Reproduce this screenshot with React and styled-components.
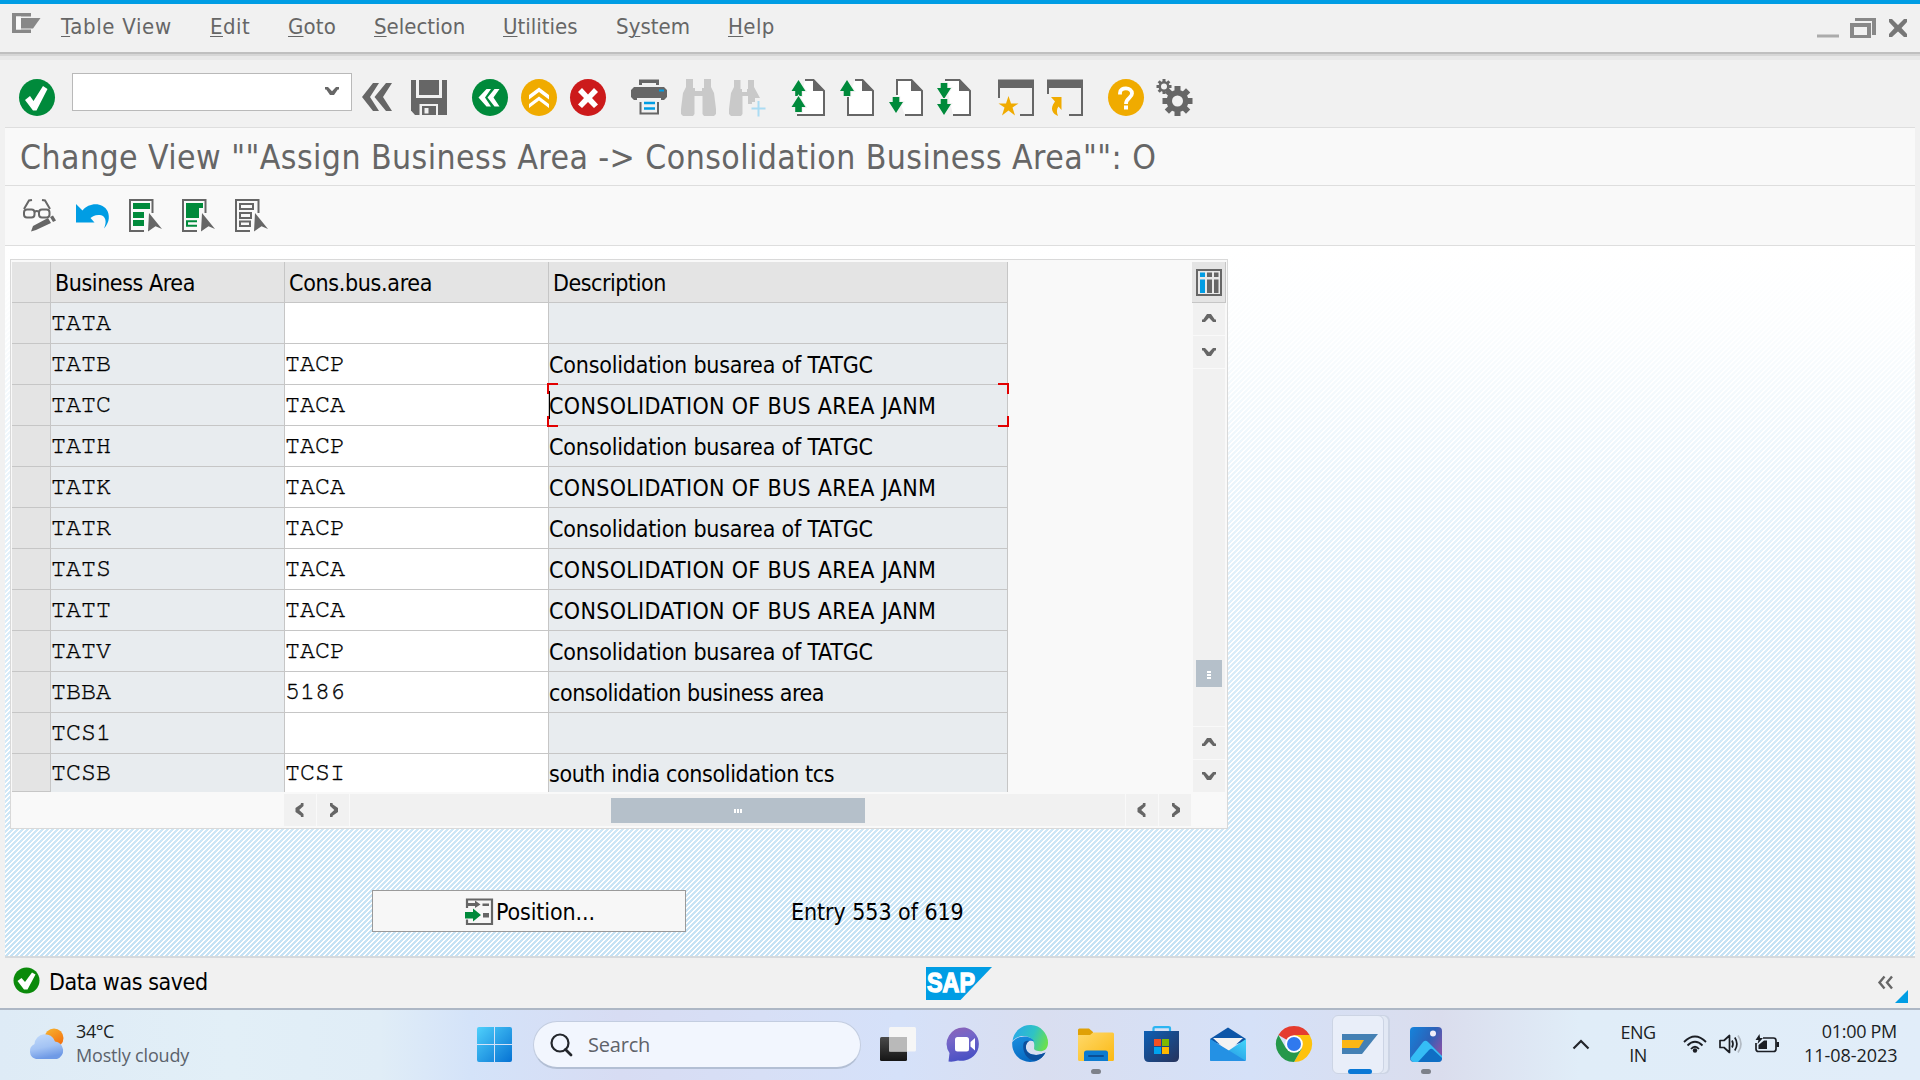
import React from "react";
import styled, { createGlobalStyle, css } from "styled-components";

const UI = `"DejaVu Sans Condensed", "DejaVu Sans", sans-serif`;
const SEGOE = `"Open Sans", "Noto Sans", sans-serif`;
const MONO = `"FreeMono", "Liberation Mono", monospace`;
const INK = "#666666";
const GREEN = "#008a3b";
const BLUE = "#009de4";
const AMBER = "#f0ab00";

const GlobalStyle = createGlobalStyle`
  body { margin: 0; background: #f1f1f1; overflow: hidden; }
  * { box-sizing: border-box; }
  svg { display: block; flex: none; }
`;

const Screen = styled.div`
  width: 1920px;
  height: 1080px;
  display: flex;
  flex-direction: column;
  background: #f1f1f1;
  font-family: ${UI};
`;

const Text = styled.span`
  white-space: pre;
  letter-spacing: ${(p) => p.$ls || 0}px;
`;

const Icon = styled.svg.attrs((p) => ({
  width: p.$w,
  height: p.$h,
  viewBox: `0 0 ${p.$w} ${p.$h}`,
}))`
  margin-left: ${(p) => p.$ml || 0}px;
  margin-top: ${(p) => p.$mt || 0}px;
  overflow: visible;
`;

/* ---------- menu bar ---------- */
const Accent = styled.div`
  height: 4px;
  background: ${BLUE};
`;
const MenuBar = styled.nav`
  height: 48px;
  display: flex;
  align-items: center;
  padding: 0 13px 0 12px;
`;
const MenuList = styled.div`
  display: flex;
  gap: 39px;
  margin-left: 20px;
  flex: 1;
`;
const MenuItem = styled.span`
  width: ${(p) => p.$w}px;
  font-size: 22px;
  line-height: 44px;
  height: 46px;
  color: ${INK};
  white-space: pre;
  letter-spacing: ${(p) => p.$ls}px;
`;
const Mnemonic = styled.u`
  text-decoration-thickness: 1px;
  text-underline-offset: 2px;
`;
const MenuShadow = styled.div`
  height: 8px;
  background: linear-gradient(#bfbfbf 0 2px, #d6d6d6 2px 4px, #e8e8e8 4px 8px);
`;

/* ---------- framed work area ---------- */
const Frame = styled.main`
  height: 898px;
  margin: 0 5px;
  display: flex;
  flex-direction: column;
`;
const Toolbar = styled.div`
  height: 68px;
  border-bottom: 1px solid #dedede;
  display: flex;
  align-items: flex-start;
  padding: 19px 0 0 14px;
`;
const CommandField = styled.div`
  width: 280px;
  height: 38px;
  margin: -6px 0 0 17px;
  border: 1px solid #b9b9b9;
  background: #fff;
  display: flex;
  align-items: center;
  justify-content: flex-end;
  padding: 0 11px 2px 0;
`;
const TitleStrip = styled.h1`
  margin: 0;
  height: 58px;
  padding: 1px 0 0 15px;
  border-bottom: 1px solid #dedede;
  background: #f9f9f9;
  font-size: 33.5px;
  font-weight: 400;
  line-height: 57px;
  color: ${INK};
`;
const AppToolbar = styled.div`
  height: 60px;
  border-bottom: 1px solid #dedede;
  background: #f9f9f9;
  display: flex;
  align-items: flex-start;
  padding: 13px 0 0 18px;
`;
const Workspace = styled.section`
  flex: 1;
  border-bottom: 2px solid #d5d9dc;
  padding: 13px 0 0 5px;
  background:
    repeating-linear-gradient(135deg, rgba(255,255,255,0) 0 1.77px, #fff 1.77px 3.535px),
    linear-gradient(#ffffff 0, #fbfdfe 80px, #dceefa 380px, #c5e2f4 710px);
`;

/* ---------- table control ---------- */
const TableControl = styled.div`
  width: 1218px;
  height: 570px;
  border: 1px solid #d9d9d9;
  background: #f9f9f9;
  display: flex;
  padding: 2px 1px 2px 1px;
`;
const TableMain = styled.div`
  width: 1181px;
  display: flex;
  flex-direction: column;
`;
const Grid = styled.div`
  width: 996px;
  height: 530px;
`;
const cellSize = css`
  display: grid;
  grid-template-columns: 39px 234px 264px 459px;
  grid-template-rows: 100%;
`;
const HeadRow = styled.div`
  ${cellSize}
  height: 41px;
`;
const HeadCell = styled.div`
  background: #e4e4e4;
  border-right: 1px solid #c6c6c6;
  border-bottom: 1px solid #c6c6c6;
  padding: 1px 0 0 4px;
  font-size: 23px;
  line-height: 41px;
  color: #000;
`;
const BodyRow = styled.div`
  ${cellSize}
  height: ${(p) => (p.$last ? 38 : 41)}px;
`;
const TONES = { edit: "#ffffff", sel: "#e4e4e4", read: "#e8ecef" };
const Cell = styled.div`
  position: relative;
  background: ${(p) => TONES[p.$tone || "read"]};
  border-right: 1px solid #c6c6c6;
  border-bottom: ${(p) => (p.$last && p.$tone !== "sel" ? "none" : "1px solid #c6c6c6")};
  font-family: ${(p) => (p.$mono ? MONO : UI)};
  font-size: ${(p) => (p.$mono ? 25 : 23)}px;
  line-height: ${(p) => (p.$mono ? (p.$last ? 37 : 39) : p.$last ? 41 : 43)}px;
  color: #000;
  -webkit-text-stroke: ${(p) => (p.$mono ? "0.35px #000" : "0")};
`;
const Corner = styled.i`
  position: absolute;
  width: 11px;
  height: 11px;
  border: 0 solid #e20000;
  ${(p) => (p.$top ? "top: -2px; border-top-width: 2px;" : "bottom: -2px; border-bottom-width: 2px;")}
  ${(p) => (p.$left ? "left: -2px; border-left-width: 2px;" : "right: -2px; border-right-width: 2px;")}
  z-index: 1;
`;
const Caret = styled.i`
  position: absolute;
  left: 0;
  top: 6px;
  width: 1px;
  height: 28px;
  background: #000;
`;
const HScroll = styled.div`
  display: flex;
  gap: 1px;
  height: 32px;
  margin: 2px 0 0 272px;
  width: 907px;
`;
const ScrollButton = styled.div`
  width: 32px;
  height: 32px;
  background: #f1f1f1;
  display: flex;
  align-items: center;
  justify-content: center;
`;
const HTrack = styled.div`
  flex: 1;
  background: #f1f1f1;
  padding: 4px 0 0 261px;
`;
const HThumb = styled.div`
  width: 254px;
  height: 25px;
  background: #b5c0ca;
  display: flex;
  align-items: center;
  justify-content: center;
  gap: 1px;
`;
const Grip = styled.i`
  width: ${(p) => (p.$v ? 4 : 2)}px;
  height: ${(p) => (p.$v ? 2 : 4)}px;
  background: #fff;
`;
const VColumn = styled.div`
  width: 32px;
  height: 530px;
  display: flex;
  flex-direction: column;
  gap: 1px;
`;
const ConfigButton = styled.div`
  width: 34px;
  height: 41px;
  margin: 0 0 -1px -1px;
  background: #e4e4e4;
  border: solid #c6c6c6;
  border-width: 0 1px 1px 0;
  display: flex;
  align-items: center;
  justify-content: center;
`;
const VTrack = styled.div`
  flex: 1;
  background: #f1f1f1;
  padding: 291px 0 0 3px;
`;
const VThumb = styled.div`
  width: 26px;
  height: 27px;
  background: #b5c0ca;
  display: flex;
  flex-direction: column;
  align-items: center;
  justify-content: center;
  padding-top: 3px;
  gap: 1px;
`;
const Actions = styled.div`
  display: flex;
  margin: 61px 0 0 362px;
`;
const PositionButton = styled.div`
  width: 314px;
  height: 42px;
  border: 1px solid #9a9a9a;
  background: #f7f7f7;
  display: flex;
  align-items: center;
  padding-left: 92px;
  gap: 2px;
  font-size: 23px;
  line-height: 42px;
`;
const ButtonLabel = styled(Text)`
  padding-top: 2px;
`;
const EntryInfo = styled.div`
  margin-left: 105px;
  font-size: 23px;
  line-height: 44px;
`;

/* ---------- status bar ---------- */
const StatusBar = styled.footer`
  height: 50px;
  display: flex;
  align-items: flex-start;
  padding: 9px 12px 0 13px;
`;
const StatusText = styled.div`
  width: 877px;
  padding-left: 9px;
  font-size: 23px;
  line-height: 30px;
`;
const StatusRight = styled.div`
  margin-left: auto;
  display: flex;
  align-items: flex-start;
`;

/* ---------- taskbar ---------- */
const Taskbar = styled.div`
  height: 72px;
  border-top: 2px solid #adb7c5;
  display: flex;
  align-items: center;
  padding: 0 23px 2px 28px;
  font-family: ${SEGOE};
  color: #1b1e24;
  background: linear-gradient(90deg, #deebf6 0, #e2eff7 230px, #e0edf7 380px, #d4e3f9 470px, #d7dcf3 620px, #d7dff6 760px, #d5e1f9 900px, #d9def0 1040px, #d5e1f8 1250px, #dadded 1440px, #e0edf8 1580px, #e1edf9 100%);
`;
const Weather = styled.div`
  width: 449px;
  display: flex;
  align-items: center;
`;
const TwoLines = styled.div`
  display: flex;
  flex-direction: column;
  text-align: ${(p) => p.$align || "left"};
  margin-left: ${(p) => p.$ml}px;
  margin-top: ${(p) => p.$mt ?? -3}px;
  width: ${(p) => (p.$w ? p.$w + "px" : "auto")};
  font-size: 18px;
  line-height: ${(p) => p.$lh || 24}px;
`;
const Muted = styled(Text)`
  color: #5b626b;
`;
const SearchBox = styled.div`
  width: 328px;
  height: 48px;
  margin: 2px 0 0 21px;
  border-radius: 24px;
  border: 1px solid #c3cde0;
  border-bottom: 2px solid #b3bfd4;
  background: #f2f6fe;
  display: flex;
  align-items: center;
  padding-left: 15px;
  gap: 15px;
  font-size: 20px;
  color: #5f6269;
`;
const Apps = styled.div`
  display: flex;
  margin-left: 4px;
`;
const AppSlot = styled.div`
  position: relative;
  width: 66px;
  height: 68px;
  display: flex;
  align-items: center;
  justify-content: center;
  padding-left: ${(p) => p.$nudge || 0}px;
`;
const ActiveTile = styled.div`
  position: absolute;
  left: 5px;
  top: 5px;
  width: 52px;
  height: 59px;
  border-radius: 6px;
  border: 1px solid #ccd4e4;
  background: #e9eef9;
  box-shadow: 5px 0 0 -1px #e2e8f4, 6px 0 0 0 #ccd4e4;
`;
const Running = styled.i`
  position: absolute;
  bottom: 4px;
  left: 50%;
  width: ${(p) => (p.$on ? 24 : 10)}px;
  height: 5px;
  margin-left: ${(p) => (p.$on ? -12 : -5)}px;
  border-radius: 3px;
  background: ${(p) => (p.$on ? "#0a78d6" : "#7d818a")};
`;
const Tray = styled.div`
  margin-left: auto;
  display: flex;
  align-items: center;
`;

/* ---------- icon parts ---------- */
const TURNS = {
  down: "",
  left: "translate(-0.5 0) rotate(90 8 8)",
  up: "translate(0 -1) rotate(180 8 8)",
  right: "translate(1 0) rotate(270 8 8)",
};
const Chevron = ({ dir }) => (
  <Icon $w={16} $h={16}>
    <path d="M1 4h3l4 4.3L12 4h3v2.6h-1.2L10 12H6L2.2 6.6H1z" transform={TURNS[dir]} fill={INK} />
  </Icon>
);

const DocIcon = ({ ml, arrows, page }) => (
  <Icon $w={34} $h={37} $ml={ml}>
    <path d={page} fill="#fff" />
    <path d={page} fill="none" stroke={INK} strokeWidth="2" />
    <path d="M22 0.5L33.5 12H22z" fill={INK} />
    {arrows.map(([x, y, up]) => (
      <path
        key={y}
        d={up ? "M7 0L14 11H10.3V16H3.7V11H0z" : "M7 16L0 5H3.7V0H10.3V5H14z"}
        transform={`translate(${x} ${y})`}
        fill={GREEN}
        stroke="#f1f1f1"
        strokeWidth="2"
        paintOrder="stroke"
      />
    ))}
  </Icon>
);

const Gear = ({ cx, cy, r, hole, teeth }) => (
  <g>
    {Array.from({ length: teeth }, (_, i) => (
      <rect
        key={i}
        x={cx - r * 0.2}
        y={cy - r}
        width={r * 0.4}
        height={r}
        fill={INK}
        transform={`rotate(${(360 / teeth) * i} ${cx} ${cy})`}
      />
    ))}
    <circle cx={cx} cy={cy} r={r * 0.73} fill={INK} />
    <circle cx={cx} cy={cy} r={hole} fill="#f1f1f1" />
  </g>
);

const ListIcon = ({ ml, kind }) => (
  <Icon $w={33} $h={33} $ml={ml}>
    <path d="M23.5 14V1H1V32H15" fill="none" stroke={INK} strokeWidth="2" />
    {kind === "all" && <path d="M4 4H21V10H4zM4 13H15V19H4zM4 21H15V27H4z" fill={GREEN} />}
    {kind === "block" && (
      <>
        <path d="M4 4H21V9H17V19H4z" fill={GREEN} />
        <path d="M15 22.2H5V26.8H15" fill="none" stroke={GREEN} strokeWidth="2" />
      </>
    )}
    {kind === "none" && (
      <path d="M5 5H18V10H5zM5 14H16V19H5zM5 22.5H15V27H5z" fill="none" stroke={INK} strokeWidth="2" />
    )}
    <path d="M20 14L33 30L26.5 27.3L19 32.5z" fill={INK} />
  </Icon>
);

const CircleIcon = ({ ml, color, children }) => (
  <Icon $w={36} $h={37} $ml={ml}>
    <ellipse cx="18" cy="18.5" rx="18" ry="18.5" fill={color} />
    {children}
  </Icon>
);

const MENU = [
  ["", "T", "able View", 110, 0.68],
  ["", "E", "dit", 39, 0.45],
  ["", "G", "oto", 47, 0.15],
  ["", "S", "election", 90, 0],
  ["", "U", "tilities", 74, 0],
  ["S", "y", "stem", 73, 0.05],
  ["", "H", "elp", 46, 0.4],
];

const CAPS = ["CONSOLIDATION OF BUS AREA JANM", 0.32];
const MIXED = ["Consolidation busarea of TATGC", -0.2];
const ROWS = [
  ["TATA", "", ["", 0]],
  ["TATB", "TACP", MIXED],
  ["TATC", "TACA", CAPS],
  ["TATH", "TACP", MIXED],
  ["TATK", "TACA", CAPS],
  ["TATR", "TACP", MIXED],
  ["TATS", "TACA", CAPS],
  ["TATT", "TACA", CAPS],
  ["TATV", "TACP", MIXED],
  ["TBBA", "5186", ["consolidation business area", -0.44]],
  ["TCS1", "", ["", 0]],
  ["TCSB", "TCSI", ["south india consolidation tcs", -0.36]],
];

const MainToolbar = () => (
  <Toolbar>
    <CircleIcon color={GREEN}>
      <path d="M6 21L11 17L14.5 22L24 7L28.5 10L17.5 31.5H14z" fill="#fff" />
    </CircleIcon>
    <CommandField>
      <Chevron dir="down" />
    </CommandField>
    <Icon $w={30} $h={28} $ml={10} $mt={4}>
      <path d="M11 0H17L8 14L17 28H11L0 14zM24 0H30L21 14L30 28H24L12.5 14z" fill={INK} />
    </Icon>
    <Icon $w={36} $h={36} $ml={19}>
      <path d="M0 1H36V36H4L0 31.500z" fill={INK} />
      <path d="M5 1H31V19H5z" fill="#f1f1f1" />
      <path d="M8 1H28V16H8z" fill={INK} />
      <path d="M8.500 25H27V36H8.500z" fill="#f1f1f1" />
      <path d="M11 27H25V36H11z" fill={INK} />
      <path d="M13.500 29H17.500V34.500H13.500z" fill="#f1f1f1" />
    </Icon>
    <CircleIcon color={GREEN} ml={25}>
      <path d="M14.5 10H19L13 18.5L19 27.5H14.5L6.5 18.5zM22.5 10H27.5L21.5 18.5L27.5 27.5H22.5L15.5 18.5z" fill="#fff" />
    </CircleIcon>
    <CircleIcon color={AMBER} ml={13}>
      <path d="M18 8.5L28 16V20.5L18 13L8 20.5V16zM18 17.5L28 25V29L18 21.5L8 29V25z" fill="#fff" />
    </CircleIcon>
    <CircleIcon color="#cc1a1b" ml={13}>
      <path d="M12 9L18 15.5L24 9L28 13L22 19L28 25.5L24 29L18 23L12 29L8 25.5L14 19L8 13z" fill="#fff" />
    </CircleIcon>
    <Icon $w={36} $h={36} $ml={25}>
      <path d="M8 6V0.5H28V6H25V4H11V6zM3 8H33L36 11V18L33 21H30V16H6V21H3L0 18V11z" fill={INK} />
      <path d="M28 10.5H33V12.5H28z" fill={BLUE} />
      <path d="M6 16H30V19H6z" fill={INK} />
      <path d="M8 19H29V23H8z" fill="#f1f1f1" />
      <path d="M9.500 23V34.500H27V23" fill="none" stroke={INK} strokeWidth="2" />
      <path d="M13 24H24M13 29.500H24" stroke={BLUE} strokeWidth="2.300" />
    </Icon>
    <Icon $w={35} $h={37} $ml={14}>
      <path d="M5 0H12V9H14V12H21V9H23V0H30V8L33 14L35 30V35L33 37H23L21.500 35V17H13.500V35L12 37H2L0 35V30L2 14L5 8z" fill="#c9c9c9" />
    </Icon>
    <Icon $w={37} $h={37} $ml={13}>
      <path d="M5 1H11.500V10H13V13H18V10H19V1H25V8L31 19H26V23H23V25H19V17H13.500V35L12 37H2L0 35V30L2 14L5 8z" fill="#c9c9c9" />
      <path d="M29.500 22V37.500M22.500 29.500H36.500" stroke="#abdcf3" strokeWidth="2" />
    </Icon>
    <DocIcon ml={25} page="M14 1H22.500L33 12V36H6" arrows={[[0.500, 1, true], [0.500, 17, true]]} />
    <DocIcon ml={14.500} page="M15 1H22.500L33 12V36H8V18" arrows={[[0, 1, true]]} />
    <DocIcon ml={15.500} page="M8 16V1H22.500L33 12V36H16" arrows={[[0, 18, false]]} />
    <DocIcon ml={14} page="M8 1H22.500L33 12V36H16" arrows={[[0, 4, false], [0, 20, false]]} />
    <Icon $w={36} $h={37} $ml={27}>
      <path d="M0 0.500H36V9H0z" fill={INK} />
      <path d="M1 9V19M35 9V36H22" fill="none" stroke={INK} strokeWidth="2" />
      <path d="M10.500 17L13 24.500H20.500L14.500 28.500L17 36.500L10.500 31.500L4 36.500L6.500 28.500L0.500 24.500H8z" fill={AMBER} />
    </Icon>
    <Icon $w={36} $h={37} $ml={13}>
      <path d="M0 0.500H36V9H0z" fill={INK} />
      <path d="M1 9V15M35 9V36H22" fill="none" stroke={INK} strokeWidth="2" />
      <path d="M4 18H14.500V31L11.500 27.500C9.500 30 9.500 33 11 37C6 35 2 30 8 22.500z" fill={AMBER} />
    </Icon>
    <CircleIcon color={AMBER} ml={25}>
      <path d="M12 15.500V14C12 7.500 24 8 24 14.500C24 19 18 19 18 25" fill="none" stroke="#fff" strokeWidth="3.800" />
      <path d="M16 26.500H20V30.500H16z" fill="#fff" />
    </CircleIcon>
    <Icon $w={35} $h={37} $ml={13}>
      <Gear cx={7} cy={7.500} r={7.500} hole={3} teeth={8} />
      <Gear cx={20.500} cy={22} r={15} hole={5.500} teeth={8} />
    </Icon>
  </Toolbar>
);

const TableBlock = () => (
  <TableControl>
    <TableMain>
      <Grid>
        <HeadRow>
          <HeadCell />
          <HeadCell><Text $ls={-0.42}>Business Area</Text></HeadCell>
          <HeadCell><Text $ls={-0.32}>Cons.bus.area</Text></HeadCell>
          <HeadCell><Text $ls={-0.46}>Description</Text></HeadCell>
        </HeadRow>
        {ROWS.map(([area, cons, [desc, ls]], i) => {
          const last = i === ROWS.length - 1;
          const focused = area === "TATC";
          return (
            <BodyRow key={area} $last={last}>
              <Cell $tone="sel" $last={last} />
              <Cell $mono $last={last}><Text>{area}</Text></Cell>
              <Cell $mono $tone="edit" $last={last}><Text>{cons}</Text></Cell>
              <Cell $last={last}>
                <Text $ls={ls}>{desc}</Text>
                {focused && (
                  <>
                    <Corner $top $left />
                    <Corner $top />
                    <Corner $left />
                    <Corner />
                    <Caret />
                  </>
                )}
              </Cell>
            </BodyRow>
          );
        })}
      </Grid>
      <HScroll>
        <ScrollButton><Chevron dir="left" /></ScrollButton>
        <ScrollButton><Chevron dir="right" /></ScrollButton>
        <HTrack>
          <HThumb><Grip /><Grip /><Grip /></HThumb>
        </HTrack>
        <ScrollButton><Chevron dir="left" /></ScrollButton>
        <ScrollButton><Chevron dir="right" /></ScrollButton>
      </HScroll>
    </TableMain>
    <VColumn>
      <ConfigButton>
        <Icon $w={26} $h={27}>
          <path d="M1 1H25V26H1z" fill="#e9e9e9" stroke={INK} strokeWidth="2" />
          <path d="M4 3.500H9V8H4zM4 10.500H9V24H4z" fill={BLUE} />
          <path d="M11 3.500H16V8H11zM11 10.500H16V24H11zM18 3.500H22.500V8H18zM18 10.500H22.500V24H18z" fill={INK} />
        </Icon>
      </ConfigButton>
      <ScrollButton><Chevron dir="up" /></ScrollButton>
      <ScrollButton><Chevron dir="down" /></ScrollButton>
      <VTrack>
        <VThumb><Grip $v /><Grip $v /><Grip $v /></VThumb>
      </VTrack>
      <ScrollButton><Chevron dir="up" /></ScrollButton>
      <ScrollButton><Chevron dir="down" /></ScrollButton>
    </VColumn>
  </TableControl>
);

const DefsHost = styled.svg`
  position: absolute;
`;
const Defs = () => (
  <DefsHost width="0" height="0">
    <defs>
      <linearGradient id="win" x1="0" y1="0" x2="1" y2="1"><stop offset="0" stopColor="#4fd0fb" /><stop offset="1" stopColor="#0672d3" /></linearGradient>
      <linearGradient id="sun" x1="0" y1="0" x2="0.6" y2="1"><stop offset="0" stopColor="#f7b731" /><stop offset="1" stopColor="#f4700e" /></linearGradient>
      <linearGradient id="cloud" x1="0" y1="0" x2="0.3" y2="1"><stop offset="0" stopColor="#c4dcfb" /><stop offset="0.6" stopColor="#a3c3f4" /><stop offset="1" stopColor="#6f9ae6" /></linearGradient>
      <linearGradient id="chat" x1="0" y1="0" x2="0.3" y2="1"><stop offset="0" stopColor="#8f62b4" /><stop offset="0.4" stopColor="#7566c8" /><stop offset="1" stopColor="#4a51c4" /></linearGradient>
      <linearGradient id="edgeTop" x1="0" y1="0.3" x2="1" y2="0.6"><stop offset="0" stopColor="#2aa9e8" /><stop offset="0.55" stopColor="#2fc3c4" /><stop offset="1" stopColor="#6be04d" /></linearGradient>
      <linearGradient id="edgeLow" x1="0" y1="0" x2="0.5" y2="1"><stop offset="0" stopColor="#1a8fe0" /><stop offset="1" stopColor="#0667c0" /></linearGradient>
      <linearGradient id="folder" x1="0" y1="0" x2="1" y2="1"><stop offset="0" stopColor="#ffd96b" /><stop offset="1" stopColor="#fbb913" /></linearGradient>
      <linearGradient id="store" x1="0" y1="0" x2="1" y2="1"><stop offset="0" stopColor="#0e5fb4" /><stop offset="1" stopColor="#27335c" /></linearGradient>
      <linearGradient id="mail" x1="0" y1="1" x2="1" y2="0"><stop offset="0" stopColor="#1c86dc" /><stop offset="1" stopColor="#43d6fa" /></linearGradient>
      <linearGradient id="photo" x1="0" y1="0" x2="1" y2="0.6"><stop offset="0" stopColor="#1484dc" /><stop offset="0.6" stopColor="#2c62b8" /><stop offset="1" stopColor="#8052a8" /></linearGradient>
      <linearGradient id="dark" x1="0" y1="0" x2="0" y2="1"><stop offset="0" stopColor="#4a4a4a" /><stop offset="1" stopColor="#151515" /></linearGradient>
    </defs>
  </DefsHost>
);

const TileIcon = styled(Icon)`
  position: relative;
`;

const TaskbarBlock = () => (
  <Taskbar>
    <Weather>
      <Icon $w={38} $h={32}>
        <circle cx="26" cy="10" r="9.500" fill="url(#sun)" />
        <path d="M8 31A8 8 0 0 1 6.500 16A10.500 10.500 0 0 1 27 13.500A9 9 0 0 1 29 31z" fill="url(#cloud)" />
      </Icon>
      <TwoLines $ml={10}>
        <Text $ls={-0.4}>34°C</Text>
        <Muted $ls={-0.17}>Mostly cloudy</Muted>
      </TwoLines>
    </Weather>
    <Icon $w={35} $h={35}>
      <path d="M2 0H17V17H0V2Q0 0 2 0zM18 0H33Q35 0 35 2V17H18zM0 18H17V35H2Q0 35 0 33zM18 18H35V33Q35 35 33 35H18z" fill="url(#win)" />
    </Icon>
    <SearchBox>
      <Icon $w={24} $h={24}>
        <circle cx="11" cy="10" r="8.500" fill="none" stroke="#23262b" strokeWidth="2.200" />
        <path d="M16.500 16.500L22 22" stroke="#23262b" strokeWidth="2.800" strokeLinecap="round" />
      </Icon>
      <Text $ls={-0.2}>Search</Text>
    </SearchBox>
    <Apps>
      <AppSlot>
        <Icon $w={36} $h={34}>
          <rect x="0" y="10" width="27" height="24" rx="1.500" fill="url(#dark)" />
          <rect x="9" y="0" width="27" height="24.500" rx="1.500" fill="#f6f6f6" />
          <path d="M9 10H27V24.500H9z" fill="#b9b9b9" />
        </Icon>
      </AppSlot>
      <AppSlot $nudge={1}>
        <Icon $w={34} $h={35}>
          <path d="M17 0.500A17 16.500 0 1 1 10 33.500Q6 35 0.500 34.500L1.500 26A17 16.500 0 0 1 17 0.500z" fill="url(#chat)" />
          <rect x="7" y="10" width="14" height="14.500" rx="2.500" fill="#fff" />
          <path d="M22.500 15L27 11V23.500L22.500 19.500z" fill="#fff" />
        </Icon>
      </AppSlot>
      <AppSlot>
        <Icon $w={36} $h={36}>
          <path d="M0.500 15A17.800 17.800 0 0 1 36 17C36 25 29 26.500 24 24.500C20.500 23 23 22 22 17C20 9 7 7 0.500 15z" fill="url(#edgeTop)" />
          <path d="M0.300 16C6 8.500 19 9 22 15.500C17 13 13 17 14 22.500C15 29 25 31 33.500 26.500C30 33 24.500 36 18 36A18 18 0 0 1 0.300 16z" fill="url(#edgeLow)" />
          <path d="M11.500 17.500C10 24 14 35 24 34.500C28 33.500 31.500 30.500 33.500 26.500C25 31 15 29 14 22.500C13.500 19 15 16.500 17 15C14.500 14.500 12 15.500 11.500 17.500z" fill="#0d4f9c" />
        </Icon>
      </AppSlot>
      <AppSlot>
        <Icon $w={36} $h={33}>
          <path d="M0 2Q0 0.500 1.500 0.500H11L15 4V8H0z" fill="#e0a106" />
          <path d="M0 7H12L15 4.500H34.500Q36 4.500 36 6V31.500Q36 33 34.500 33H1.500Q0 33 0 31.500z" fill="url(#folder)" />
          <path d="M6 33V25Q6 22.500 8.500 22.500H27.500Q30 22.500 30 25V33z" fill="#0d7bd0" />
          <path d="M11 28H25" stroke="#0a4f96" strokeWidth="2" strokeLinecap="round" />
        </Icon>
        <Running />
      </AppSlot>
      <AppSlot>
        <Icon $w={35} $h={36} $ml={-2}>
          <path d="M9.500 7V2.500Q9.500 1.200 11 1.200H24.500Q26 1.200 26 2.500V7" fill="none" stroke="#2cb5f2" strokeWidth="2.200" />
          <path d="M0 5H35V31Q35 36 30 36H5Q0 36 0 31z" fill="url(#store)" />
          <path d="M10 13H17V20H10z" fill="#f25022" /><path d="M18 13H25V20H18z" fill="#7fba00" />
          <path d="M10 21H17V28H10z" fill="#00a4ef" /><path d="M18 21H25V28H18z" fill="#ffb900" />
        </Icon>
      </AppSlot>
      <AppSlot>
        <Icon $w={36} $h={34}>
          <path d="M0 12L18 0.500L36 12V14L18 20L0 14z" fill="#0d56a8" />
          <path d="M3 11H33L18 25z" fill="#f3f3f3" />
          <path d="M0 12L18 24L36 12V32.500Q36 34 34.500 34H1.500Q0 34 0 32.500z" fill="url(#mail)" />
          <path d="M0 12L36 34H1.500Q0 34 0 32.500z" fill="#2491e4" />
        </Icon>
      </AppSlot>
      <AppSlot>
        <Icon $w={36} $h={36}>
          <path d="M18 18L2.410 9A18 18 0 0 1 33.590 9z" fill="#e53b2e" />
          <path d="M18 9H33.590A18 18 0 0 1 18 36L25.800 22.500z" fill="#fdc20c" />
          <path d="M10.200 22.500L2.410 9A18 18 0 0 0 18 36L25.800 22.500z" fill="#25984a" />
          <circle cx="18" cy="18" r="8.800" fill="#fff" />
          <circle cx="18" cy="18" r="7" fill="#3079ee" />
        </Icon>
      </AppSlot>
      <AppSlot>
        <ActiveTile />
        <TileIcon $w={36} $h={20}>
          <path d="M0 0H36L20 20H0z" fill="#4480b4" />
          <path d="M0 6H22L17 14H0z" fill="#fbb616" />
        </TileIcon>
        <Running $on />
      </AppSlot>
      <AppSlot>
        <Icon $w={32} $h={35}>
          <rect width="32" height="35" rx="4" fill="url(#photo)" />
          <circle cx="23" cy="6.500" r="3" fill="#f1eef8" />
          <path d="M0.500 31L13 15Q15.500 12.500 18 15L32 29V30Q32 35 28 35H4Q1 35 0.500 31z" fill="#35bdf5" />
          <path d="M8 35L19 23Q21 21 23 22.500L32 31Q32 35 28 35z" fill="#0f6ec4" />
        </Icon>
        <Running />
      </AppSlot>
    </Apps>
    <Tray>
      <Icon $w={18} $h={11}>
        <path d="M1.500 9.500L9 2L16.500 9.500" fill="none" stroke="#23262b" strokeWidth="2.200" />
      </Icon>
      <TwoLines $ml={29} $w={38} $align="center" $lh={23} $mt={0}>
        <Text $ls={-0.5}>ENG</Text>
        <Text $ls={-0.6}>IN</Text>
      </TwoLines>
      <Icon $w={24} $h={18} $ml={26}>
        <path d="M1 7Q12 -4 23 7M4.500 10.500Q12 3 19.500 10.500M8 14Q12 9.500 16 14" fill="none" stroke="#1b1e24" strokeWidth="1.800" />
        <circle cx="12" cy="15.500" r="2.200" fill="#1b1e24" />
      </Icon>
      <Icon $w={24} $h={20} $ml={12}>
        <path d="M1 6.500H5L10.500 1.500V18.500L5 13.500H1z" fill="none" stroke="#1b1e24" strokeWidth="1.700" strokeLinejoin="round" />
        <path d="M13 6.500Q15 10 13 13.500M15.800 3.500Q20 10 15.800 16.500" fill="none" stroke="#1b1e24" strokeWidth="1.700" />
        <path d="M19 1.500Q25 10 19 18.500" fill="none" stroke="#b3bbc4" strokeWidth="1.700" />
      </Icon>
      <Icon $w={24} $h={19} $ml={12} $mt={-2}>
        <path d="M8 4H18.500Q21 4 21 6.500V15Q21 17.500 18.500 17.500H3.500Q1 17.500 1 15V9" fill="none" stroke="#1b1e24" strokeWidth="1.700" />
        <path d="M9 6.500H12V15H3.500V11zM21.500 8H24V13H21.500z" fill="#1b1e24" />
        <path d="M4.500 0L0.500 6H3.500L2.500 10L8 4H5z" fill="#1b1e24" />
      </Icon>
      <TwoLines $ml={25} $w={93} $align="right">
        <Text $ls={-0.3}>01:00 PM</Text>
        <Text $ls={-0.05}>11-08-2023</Text>
      </TwoLines>
    </Tray>
  </Taskbar>
);

export default function App() {
  return (
    <>
      <GlobalStyle />
      <Defs />
      <Screen>
        <Accent />
        <MenuBar>
          <Icon $w={29} $h={20} $mt={-10}>
            <path d="M0 0H19V3.500H4V16.500H19V20H0z" fill="#888" />
            <path d="M4 3.500H9V16.500H4z" fill="#fafafa" />
            <path d="M9 5H28.500L21 15.500H9z" fill="#888" />
          </Icon>
          <MenuList>
            {MENU.map(([lead, key, rest, w, ls]) => (
              <MenuItem key={rest} $w={w} $ls={ls}>
                {lead}
                <Mnemonic>{key}</Mnemonic>
                {rest}
              </MenuItem>
            ))}
          </MenuList>
          <Icon $w={22} $h={20}>
            <path d="M0 16.500H22V19.500H0z" fill="#ababab" />
          </Icon>
          <Icon $w={26} $h={20} $ml={11} $mt={-1}>
            <path d="M5 0H26V17H22V3H5z" fill="#888" />
            <path d="M0 5H21V20H0zM4 9V17H17V9z" fill="#888" fillRule="evenodd" />
          </Icon>
          <Icon $w={18} $h={18} $ml={13}>
            <path d="M0 0H3L9 6L15 0H18V3L12.500 9L18 15V18H15L9 12.500L3 18H0V15L5.500 9L0 3z" fill="#777" />
          </Icon>
        </MenuBar>
        <MenuShadow />
        <Frame>
          <MainToolbar />
          <TitleStrip>
            <Text $ls={0.43}>{'Change View ""Assign Business Area -> Consolidation Business Area"": O'}</Text>
          </TitleStrip>
          <AppToolbar>
            <Icon $w={33} $h={33}>
              <path d="M1 10L6 1.500L9 1M19 1L22 1.500L27 10" fill="none" stroke={INK} strokeWidth="2" />
              <rect x="1" y="10.500" width="10.500" height="8" rx="3" fill="none" stroke={INK} strokeWidth="2" />
              <rect x="16" y="10.500" width="10.500" height="8" rx="3" fill="none" stroke={INK} strokeWidth="2" />
              <path d="M11.500 13Q13.700 11 16 13" fill="none" stroke={INK} strokeWidth="2" />
              <path d="M8 32.500L10 27L25 19L28 24L13 31zM27 18L30 16.500L33 21.500L30 23z" fill={INK} />
            </Icon>
            <Icon $w={33} $h={24} $ml={20} $mt={5}>
              <path d="M0 0L6.500 6.500C13 -2 27 -2 31.500 7C34.500 14 32 20 28 24.500C31 18 30 12 24 11C19.500 10.500 16.500 12 14.500 14L18.500 18.500H0z" fill={BLUE} />
            </Icon>
            <ListIcon ml={20} kind="all" />
            <ListIcon ml={20} kind="block" />
            <ListIcon ml={20} kind="none" />
          </AppToolbar>
          <Workspace>
            <TableBlock />
            <Actions>
              <PositionButton>
                <Icon $w={29} $h={27}>
                  <path d="M2 10V1.500H27V26H2V21.500" fill="none" stroke={INK} strokeWidth="2.200" />
                  <path d="M3 5H10V2.500L15.500 6.500L10 10V8H3zM17.500 5.500H24V8H17.500zM18 15H24V19.500H18z" fill={INK} />
                  <path d="M0 14H8V10.500L16 17L8 23.500V20.500H0z" fill={GREEN} />
                </Icon>
                <ButtonLabel $ls={-0.12}>Position...</ButtonLabel>
              </PositionButton>
              <EntryInfo><Text $ls={-0.06}>Entry 553 of 619</Text></EntryInfo>
            </Actions>
          </Workspace>
        </Frame>
        <StatusBar>
          <Icon $w={27} $h={27}>
            <circle cx="13.500" cy="13.500" r="13" fill="#0b8a0b" />
            <path d="M4.500 14L8.500 11L12 15L19 5.500L22.500 7.500L14.500 22.500H11z" fill="#fff" />
          </Icon>
          <StatusText><Text $ls={-0.42}>Data was saved</Text></StatusText>
          <Icon $w={66} $h={33} $ml={8.5}>
            <path d="M0 0H66L34.500 33H0z" fill={BLUE} />
            <text x="1" y="25" fontFamily="Liberation Sans, sans-serif" fontWeight="700" fontSize="27" textLength="48" lengthAdjust="spacingAndGlyphs" fill="#fff" stroke="#fff" strokeWidth="1.400">SAP</text>
          </Icon>
          <StatusRight>
            <Icon $w={15} $h={13} $mt={9}>
              <path d="M6.500 0.500L1.500 6.500L6.500 12.500M14 0.500L9 6.500L14 12.500" fill="none" stroke={INK} strokeWidth="2.400" />
            </Icon>
            <Icon $w={13} $h={13} $ml={2} $mt={23}>
              <path d="M13 0V13H0z" fill={BLUE} />
            </Icon>
          </StatusRight>
        </StatusBar>
        <TaskbarBlock />
      </Screen>
    </>
  );
}
